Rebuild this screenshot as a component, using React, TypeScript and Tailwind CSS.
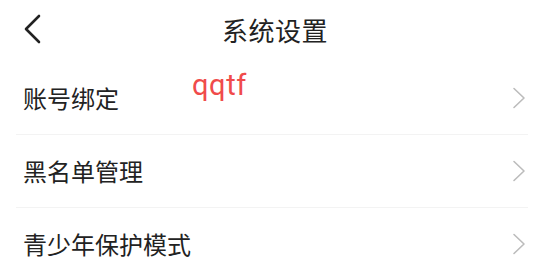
const items = ['账号绑定', '黑名单管理', '青少年保护模式'];

export default function App() {
  return (
    <div className="relative w-[550px] h-[275px] overflow-hidden bg-white font-['Noto_Sans_CJK_SC',sans-serif] text-[#222]">
      <header className="relative flex h-[62px] items-center justify-center">
        <button className="absolute left-[20px] top-[13px] flex h-[32px] w-[24px] items-center justify-center">
          <svg width="20" height="30" viewBox="0 0 20 30" fill="none">
            <path d="M17 2 L4 15 L17 28" stroke="#222" strokeWidth="2.6" strokeLinecap="round" strokeLinejoin="round" />
          </svg>
        </button>
        <h1 className="-mt-[2px] text-[26px] leading-none tracking-[0.5px]">系统设置</h1>
      </header>

      <ul className="ml-4 mr-[22px]">
        {items.map((label) => (
          <li key={label} className="flex h-[73px] items-center justify-between border-b border-[#f3f3f3] pl-[7px]">
            <span className="text-[24px] leading-none">{label}</span>
            <svg width="14" height="22" viewBox="0 0 14 22" fill="none" className="mr-[2px]">
              <path d="M2 1.5 L12 11 L2 20.5" stroke="#bcbcbc" strokeWidth="1.6" strokeLinecap="round" strokeLinejoin="round" />
            </svg>
          </li>
        ))}
      </ul>

      <span className="absolute left-[192px] top-[71px] font-['Roboto',sans-serif] text-[29px] leading-none tracking-[0.6px] text-[#f04b4b]">
        qqtf
      </span>
    </div>
  );
}
